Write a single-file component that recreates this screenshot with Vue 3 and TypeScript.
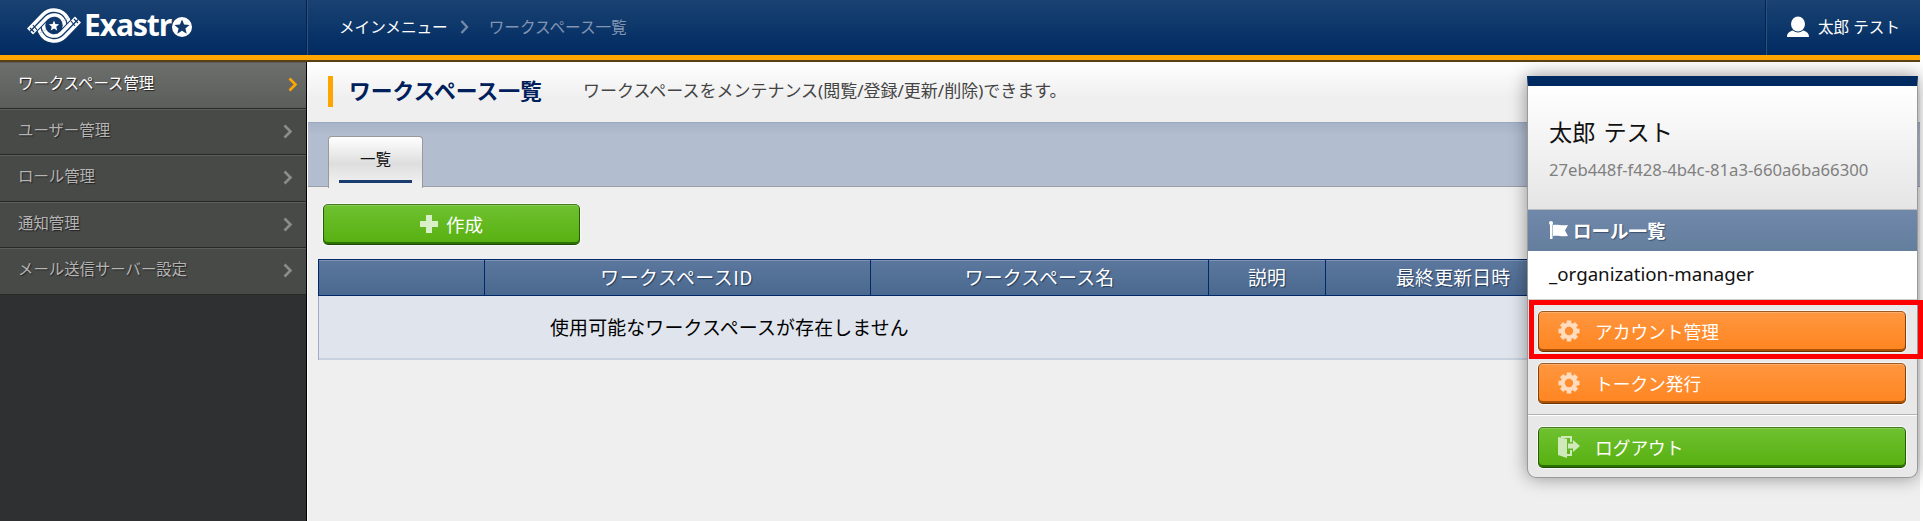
<script setup lang="ts">
interface NavItem { label: string; active?: boolean }
const nav: NavItem[] = [
  { label: 'ワークスペース管理', active: true },
  { label: 'ユーザー管理' },
  { label: 'ロール管理' },
  { label: '通知管理' },
  { label: 'メール送信サーバー設定' },
]
const columns: string[] = ['', 'ワークスペースID', 'ワークスペース名', '説明', '最終更新日時']
const accountActions: string[] = ['アカウント管理', 'トークン発行']
const upperBand = 'M3 24.500L17.800 9.300A13 13 0 0 1 38.500 12.500'
const lowerBand = 'M51 12.500L36.200 27.700A13 13 0 0 1 15.500 24.500'
</script>

<template>
  <div class="app">
    <header class="header">
      <div class="brand">
        <svg class="mark" viewBox="0 0 54 38" width="54" height="38">
          <g fill="none">
            <circle cx="27" cy="18.500" r="13" stroke="#fff" stroke-width="8.500" />
            <circle cx="27" cy="18.500" r="13" stroke="#12386a" stroke-width="1.300" />
            <template v-for="d in [upperBand, lowerBand]" :key="d">
              <path :d="d" stroke="#12386a" stroke-width="10.500" />
              <path :d="d" stroke="#fff" stroke-width="8.500" />
              <path :d="d" stroke="#12386a" stroke-width="1.300" />
            </template>
            <path d="M3 21l4 4M6 18l4 5M51 16l-4-4M48 19l-4-5" stroke="#12386a" stroke-width="1.200" />
          </g>
          <path fill="#fff" d="M27 13.500l1.400 3.500 3.700.3-2.800 2.400.9 3.700-3.200-2-3.200 2 .9-3.700-2.800-2.400 3.700-.3z" />
        </svg>
        <span class="wordmark">Exastr</span>
        <svg class="star-o" viewBox="0 0 20 20" width="20" height="20">
          <circle cx="10" cy="10" r="10" fill="#fff" />
          <path fill="#12386a" d="M10 2.500l2.100 5 5.400.4-4.100 3.500 1.300 5.300-4.700-2.900-4.700 2.900 1.300-5.300-4.100-3.500 5.400-.4z" />
        </svg>
      </div>
      <nav class="crumbs">
        <span class="crumb-home">メインメニュー</span>
        <svg width="9" height="14" viewBox="0 0 9 14"><path d="M1.500 1l5.500 6-5.500 6" fill="none" stroke="#7189aa" stroke-width="2.400" /></svg>
        <span class="crumb-here">ワークスペース一覧</span>
      </nav>
      <div class="user">
        <svg width="22" height="22" viewBox="0 0 22 22" fill="#fff"><ellipse cx="11" cy="8" rx="7" ry="7.500" /><path d="M0 21c0-4 3-6 6-6.500 3 2.500 7 2.500 10 0 3 .5 6 2.500 6 6.500z" /></svg>
        <span class="user-name">太郎 テスト</span>
      </div>
    </header>

    <div class="body">
      <aside class="side">
        <a v-for="item in nav" :key="item.label" class="side-item" :class="{ active: item.active }">
          <span>{{ item.label }}</span>
          <svg width="10" height="15" viewBox="0 0 10 15"><path d="M1.500 1.500l6 6-6 6" fill="none" stroke="currentColor" stroke-width="2.600" /></svg>
        </a>
      </aside>

      <main class="main">
        <section class="title-bar">
          <h1>ワークスペース一覧</h1>
          <p>ワークスペースをメンテナンス(閲覧/登録/更新/削除)できます。</p>
        </section>
        <div class="tabs"><div class="tab"><span>一覧</span></div></div>
        <section class="content">
          <button class="btn green create">
            <svg width="18" height="18" viewBox="0 0 18 18"><path d="M6 0h6v6h6v6h-6v6H6v-6H0V6h6z" fill="#d9efc8" /></svg>
            <span>作成</span>
          </button>
          <div class="table">
            <div class="thead"><div v-for="(c, i) in columns" :key="i" class="th"><span>{{ c }}</span></div></div>
            <div class="empty"><span>使用可能なワークスペースが存在しません</span></div>
          </div>
        </section>
      </main>
    </div>

    <div class="panel">
      <div class="panel-head">
        <div class="p-name">太郎 テスト</div>
        <div class="p-id"><span>27eb448f-f428-4b4c-81a3-660a6ba66300</span></div>
      </div>
      <div class="roles-head">
        <svg width="20" height="19" viewBox="0 0 20 19" fill="#fff"><circle cx="2" cy="2" r="2" /><path d="M1 2h2.500v16H1zM4 4c5-1 8 1 15 0l-3 5.500 3 5.500c-7 1-10-1-15 0z" /></svg>
        <span>ロール一覧</span>
      </div>
      <div class="role"><span>_organization-manager</span></div>
      <div class="account">
        <button v-for="a in accountActions" :key="a" class="btn orange">
          <svg width="22" height="22" viewBox="-11 -11 22 22">
            <g fill="#ffdcbe">
              <rect v-for="n in 4" :key="n" x="-2.300" y="-10.500" width="4.600" height="21" :transform="`rotate(${n * 45})`" />
              <circle r="8.300" />
            </g>
            <circle r="4.200" fill="#ff8c2e" />
          </svg>
          <span>{{ a }}</span>
        </button>
      </div>
      <div class="logout">
        <button class="btn green">
          <svg width="22" height="22" viewBox="0 0 22 22" fill="#cfe9bb"><path d="M0 1l9 2v19l-9-3z" /><path d="M3 0h11v6h-2V2H3zM12 14h2v6H9v-2h3z" /><path d="M10 7.500h5V4l7 6-7 6v-3.500h-5z" /></svg>
          <span>ログアウト</span>
        </button>
      </div>
    </div>
    <div class="highlight"></div>
  </div>
</template>

<style>
body { margin: 0; background: #fff; overflow: hidden; }
</style>
<style scoped>
* { box-sizing: border-box; }
.app { position: relative; width: 1923px; height: 521px; overflow: hidden; font-family: "Noto Sans", "Noto Sans CJK JP", sans-serif; color: #111; }
.app span, .p-name, h1, p { white-space: nowrap; }
.header { display: flex; width: 1920px; height: 62px; background: linear-gradient(#1a4272, #002b62 55px); border-bottom: 2px solid #5a4018; box-shadow: inset 0 -5px #ffa500; }
.brand { display: flex; width: 307px; height: 55px; padding: 7px 0 0 27px; border-right: 1px solid #06234e; }
.mark { flex: none; }
.wordmark { width: 88px; margin: -1px 0 0 3px; font: 700 30px/38px "Open Sans", sans-serif; color: #fff; letter-spacing: -1.1px; }
.star-o { margin-top: 10px; }
.crumbs { display: flex; flex: 1; height: 55px; align-items: center; padding: 0 0 3px 31px; border-left: 1px solid #2c517f; font-size: 15.600px; color: #fff; }
.crumbs svg { position: relative; top: 1px; margin: 0 20px 0 12px; }
.crumb-here { color: #8295b2; }
.user { display: flex; width: 154px; height: 55px; align-items: center; padding: 0 0 2px 20px; border-left: 1px solid #2c517f; box-shadow: -1px 0 #06234e; color: #fff; font-size: 15.600px; }
.user-name { margin-left: 9px; }
.body { display: flex; width: 1920px; height: 459px; }
.side { width: 307px; background: #2f3032; border-right: 1px solid #000; }
.side-item { display: flex; height: 46.500px; align-items: center; justify-content: space-between; padding: 0 13px 2px 18px; background: #484a48; border-top: 1px solid #5b5d5b; border-bottom: 1px solid #282a28; font-size: 15.400px; color: #b4b4b4; text-shadow: 1px 1px 1px #222; }
.side-item span { padding-bottom: 3px; }
.side-item svg { margin-top: 1px; color: #8c8c8c; }
.side-item.active { padding-right: 8px; background: linear-gradient(#6d6f6d, #5b5d5b); color: #fff; }
.side-item.active svg { color: #ffa500; }
.main { width: 1613px; background: #efefef; border-left: 1px solid #fff; }
.title-bar { display: flex; height: 60px; background: linear-gradient(#fff, #efefef 60%); padding: 14px 0 0 20px; }
h1 { flex: none; width: 255px; height: 31px; margin: 0; padding-left: 16px; border-left: 5px solid #ffa500; font-size: 21.800px; line-height: 30px; color: #00205c; }
p { margin: 0; font-size: 17px; line-height: 30px; color: #444; }
.tabs { height: 65px; padding: 13px 0 0 20px; background: linear-gradient(#a7b3c6, #b2bdd0 12px); border-top: 1px solid #99a9c0; border-bottom: 1px solid #9b9fa6; }
.tab { display: flex; width: 95px; height: 52px; padding: 9px 10px 0; border: 1px solid #999; border-bottom: 0; border-radius: 4px 4px 0 0; background: linear-gradient(#fff, #dedede 52%, #efefef 90%); font-size: 15.500px; }
.tab span { height: 37px; flex: 1; border-bottom: 3px solid #193d6f; line-height: 27px; text-align: center; }
.content { padding: 17px 0 0 10px; }
.btn { display: flex; height: 41px; width: 100%; align-items: center; padding: 0 0 2px 19px; border: 1px solid; border-radius: 5px; color: #fff; font: 17.700px "Noto Sans", "Noto Sans CJK JP", sans-serif; }
.btn.green { background: linear-gradient(#6fc130, #57b010); border-color: #437d1d #245d08 #1d4b06; box-shadow: inset 0 1px #8acb58, inset 0 -2px #2c7103, 0 0 0 1px #f8f8f8; }
.btn.orange { background: linear-gradient(#ff963f, #ff8520); border-color: #9b5a21 #84400c #6c3300; box-shadow: inset 0 1px #ffae6c, inset 0 -2px #a85107, 0 0 0 1px #f8f8f8; }
.btn span { margin-left: 15px; }
.btn.create { width: 257px; margin-left: 5px; justify-content: center; padding-left: 0; font-size: 18.500px; }
.btn.create span { margin-left: 8px; }
.table { width: 1590px; margin-top: 14px; border-left: 1px solid #9dafc8; font-family: "Noto Sans CJK JP", sans-serif; font-size: 18.900px; letter-spacing: .18px; }
.thead { display: grid; grid-template-columns: 166px 386px 338px 117px 583px; height: 37px; margin-left: -1px; border: solid #00286a; border-width: 1px 0 1px 1px; background: linear-gradient(#5b779e, #4b698f); box-shadow: inset 0 1px #7e95b5; }
.th { text-align: center; line-height: 34px; border-right: 1px solid #00286a; color: #fff; text-shadow: 1px 1px 1px #223b5c; }
.th:nth-child(2) { letter-spacing: .5px; padding-right: 2px; }
.th:last-child { text-align: left; padding-left: 70px; }
.empty { height: 64px; padding-left: 231px; background: #e0e5ed; border-bottom: 2px solid #c8d2de; line-height: 61px; color: #000; }
.panel { position: absolute; left: 1527px; top: 76px; width: 391px; height: 402px; border: 1px solid #999; border-top: 0; border-radius: 0 0 9px 9px; background: #e8e8e8; box-shadow: 0 0 18px #0006; }
.panel-head { height: 134px; margin: 0 -1px; padding: 29px 0 0 21px; border-top: 10px solid #002b62; background: linear-gradient(#fff, #e5e5e5); border-bottom: 1px solid #bbb; border-left: 1px solid #999; border-right: 1px solid #999; }
.p-name { font-size: 23.200px; line-height: 34px; word-spacing: 2px; }
.p-id { font-size: 16.700px; line-height: 24px; margin-top: 9px; color: #808080; }
.roles-head { display: flex; height: 41px; align-items: center; padding: 0 0 1px 21px; background: linear-gradient(#7088aa, #647e9e); color: #fff; font-weight: 700; font-size: 18.500px; text-shadow: 1px 1px 1px #3c506c; }
.roles-head span { margin-left: 4px; }
.role { height: 49px; padding-left: 21px; background: #fff; line-height: 46px; font-size: 18.700px; border-bottom: 1px solid #ccc; }
.account { display: grid; gap: 11px; height: 115px; padding: 11px 11px 0 10px; align-content: start; border-bottom: 1px solid #b3b3b3; }
.logout { padding: 11px 11px 0 10px; border-top: 1px solid #fff; }
.highlight { position: absolute; left: 1529px; top: 300px; width: 394px; height: 59px; border: 5px solid #f00; }
</style>
